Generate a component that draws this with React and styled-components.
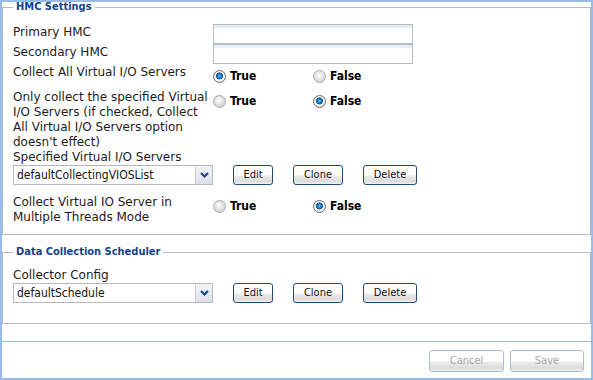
import React from "react";
import styled, { createGlobalStyle } from "styled-components";

const GlobalStyle = createGlobalStyle`
  html, body {
    margin: 0;
    padding: 0;
    background: #fff;
  }
  * {
    box-sizing: border-box;
  }
`;

export const Window = styled.div`
  width: 593px;
  height: 380px;
  border: 2px solid #99bbe8;
  background: #fff;
  display: flex;
  flex-direction: column;
  font-family: "DejaVu Sans", Verdana, sans-serif;
  font-size: 12px;
  color: #1c1c1c;
`;

export const Body = styled.div`
  flex: 1;
`;

export const Fieldset = styled.fieldset`
  margin: ${(p) => p.$top || 0}px 0 0 0;
  min-width: 0;
  border: 1px solid #b5b8c8;
  padding: ${(p) => p.$pt}px 10px ${(p) => p.$pb}px 10px;
`;

export const Legend = styled.legend`
  padding: 0 3px;
  font-family: "DejaVu Sans Condensed", "DejaVu Sans", sans-serif;
  font-weight: bold;
  font-size: 11px;
  line-height: 10px;
  color: #15428b;
`;

export const Row = styled.div`
  display: flex;
  align-items: flex-start;
  margin-top: ${(p) => p.$mt || 0}px;
`;

export const Label = styled.div`
  width: 200px;
  flex-shrink: 0;
  line-height: 15px;
  padding-top: ${(p) => p.$pt || 0}px;
`;

export const FullLabel = styled.div`
  line-height: 15px;
`;

export const TextInput = styled.div`
  width: 200px;
  height: 20px;
  border: 1px solid #b5b8c8;
  background: linear-gradient(to bottom, #e6ebee 0, #eef1f3 3px, #fff 4px);
`;

export const RadioGroup = styled.div`
  display: flex;
  padding: 6px 0;
`;

export const Option = styled.label`
  width: 100px;
  display: flex;
  align-items: center;
  gap: 4px;
  font-family: "DejaVu Sans Condensed", "DejaVu Sans", sans-serif;
  font-weight: bold;
  font-size: 12px;
  line-height: 13px;
  color: #000;
`;

export const Radio = styled.span`
  width: 13px;
  height: 13px;
  border-radius: 50%;
  flex-shrink: 0;
  border: 1px solid ${(p) => (p.$on ? "#6f6f6f" : "#ababab")};
  background: ${(p) =>
    p.$on
      ? "radial-gradient(circle at 50% 45%, #7cc4f5 0, #1a78c9 2px, #0f4f90 3.2px, #fdfdfd 3.8px, #e4e4e4 6px)"
      : "radial-gradient(circle at 45% 40%, #ffffff 0, #f0f0f0 2px, #d6d6d6 6px)"};
`;

export const ComboRow = styled.div`
  display: flex;
  align-items: center;
  gap: 20px;
`;

export const Select = styled.div`
  width: 200px;
  height: 20px;
  border: 1px solid #b5b8c8;
  display: flex;
  align-items: stretch;
  background: #fff;
`;

export const SelectText = styled.span`
  flex: 1;
  padding-left: 3px;
  line-height: 18px;
  font-family: "DejaVu Sans Condensed", "DejaVu Sans", sans-serif;
  font-size: 12px;
  color: #111;
`;

export const Trigger = styled.span`
  width: 17px;
  border-left: 1px solid #cfd4db;
  background: linear-gradient(to bottom, #f1f3f6, #dde1e7);
  display: flex;
  align-items: center;
  justify-content: center;
`;

export const Button = styled.button`
  width: ${(p) => p.$w}px;
  height: ${(p) => p.$h || 20}px;
  padding: 0;
  border: 1px solid ${(p) => (p.disabled ? "#a9bcd5" : "#1f4b7c")};
  border-radius: 3px;
  background: linear-gradient(
    to bottom,
    #ffffff 0%,
    #ffffff 50%,
    #ececec 55%,
    #dcdcdc 85%,
    #f2f2f2 100%
  );
  font-family: "DejaVu Sans Condensed", "DejaVu Sans", sans-serif;
  font-size: 11px;
  line-height: 14px;
  color: ${(p) => (p.disabled ? "#a6a6a6" : "#111")};
`;

export const Footer = styled.div`
  height: 37px;
  flex-shrink: 0;
  border-top: 1px solid #99bbe8;
  display: flex;
  justify-content: flex-end;
  align-items: flex-start;
  gap: 6px;
  padding: 8px 7px 0 0;
`;

const Chevron = () => (
  <svg width="9" height="6" viewBox="0 0 9 6">
    <polyline points="1,1 4.5,4.5 8,1" fill="none" stroke="#15428b" strokeWidth="2" />
  </svg>
);

const Combo = ({ value }) => (
  <ComboRow>
    <Select>
      <SelectText>{value}</SelectText>
      <Trigger>
        <Chevron />
      </Trigger>
    </Select>
    <Button $w={40}>Edit</Button>
    <Button $w={50}>Clone</Button>
    <Button $w={54}>Delete</Button>
  </ComboRow>
);

const TrueFalse = ({ value }) => (
  <RadioGroup>
    <Option>
      <Radio $on={value} />
      True
    </Option>
    <Option>
      <Radio $on={!value} />
      False
    </Option>
  </RadioGroup>
);

export default function App() {
  return (
    <>
      <GlobalStyle />
      <Window>
        <Body>
          <Fieldset $pt={12} $pb={9}>
            <Legend>HMC Settings</Legend>
            <Row>
              <Label $pt={1}>Primary HMC</Label>
              <TextInput />
            </Row>
            <Row>
              <Label $pt={1}>Secondary HMC</Label>
              <TextInput />
            </Row>
            <Row>
              <Label $pt={1}>Collect All Virtual I/O Servers</Label>
              <TrueFalse value={true} />
            </Row>
            <Row>
              <Label $pt={1}>
                Only collect the specified Virtual I/O Servers (if checked, Collect All Virtual I/O
                Servers option doesn't effect)
              </Label>
              <TrueFalse value={false} />
            </Row>
            <FullLabel>Specified Virtual I/O Servers</FullLabel>
            <Combo value="defaultCollectingVIOSList" />
            <Row $mt={9}>
              <Label $pt={1}>Collect Virtual IO Server in Multiple Threads Mode</Label>
              <TrueFalse value={false} />
            </Row>
          </Fieldset>
          <Fieldset $top={12} $pt={11} $pb={20}>
            <Legend>Data Collection Scheduler</Legend>
            <FullLabel>Collector Config</FullLabel>
            <Combo value="defaultSchedule" />
          </Fieldset>
        </Body>
        <Footer>
          <Button $w={75} $h={22} disabled>
            Cancel
          </Button>
          <Button $w={74} $h={22} disabled>
            Save
          </Button>
        </Footer>
      </Window>
    </>
  );
}
